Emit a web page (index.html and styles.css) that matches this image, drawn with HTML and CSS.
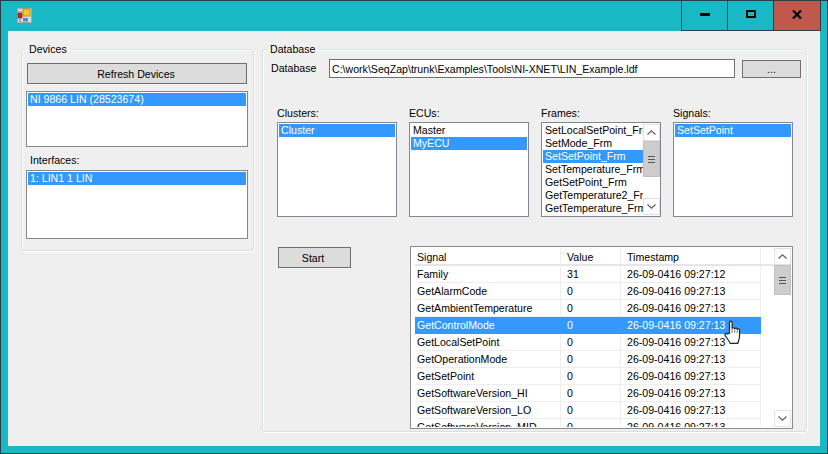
FILE: index.html
```html
<!DOCTYPE html>
<html lang="en">
<head>
    <meta charset="UTF-8">
    <title>LIN Example</title>
    <link rel="stylesheet" href="styles.css">
</head>
<body>
    <div class="window">
        <div class="titlebar">
            <svg class="app-icon" width="15" height="15" viewBox="0 0 15 15">
                <rect x="0.5" y="0.5" width="14" height="14" fill="#d8dcdc" stroke="#a9a9a0"/>
                <rect x="0" y="3" width="5" height="1" fill="#a9a9a0"/>
                <rect x="1" y="5" width="4" height="5" fill="#d81c1c" stroke="#8c1010" stroke-width="0.6"/>
                <rect x="6" y="1" width="7" height="7" fill="#f5c92e" stroke="#b8901c"/>
                <rect x="6" y="10" width="5" height="3.5" fill="#4c86e8"/>
                <rect x="2" y="11" width="2" height="3" fill="#a9a9a0"/>
            </svg>
            <div class="caption-buttons">
                <button type="button" class="caption-btn">
                    <svg width="10" height="3" viewBox="0 0 10 3"><rect width="10" height="3" fill="#000"/></svg>
                </button>
                <button type="button" class="caption-btn">
                    <svg width="10" height="8" viewBox="0 0 10 8"><rect x="1" y="1" width="8" height="6" fill="none" stroke="#000" stroke-width="2"/></svg>
                </button>
                <button type="button" class="caption-btn close">
                    <svg width="10" height="9" viewBox="0 0 10 9"><path d="M1 0.5 L9 8.5 M9 0.5 L1 8.5" stroke="#000" stroke-width="2.2" fill="none"/></svg>
                </button>
            </div>
        </div>

        <div class="client">
            <fieldset class="group devices">
                <legend>Devices</legend>
                <button type="button" class="btn refresh">Refresh Devices</button>
                <div class="listbox devices-list">
                    <div class="item selected">NI 9866 LIN (28523674)</div>
                </div>
                <label class="caption interfaces-label">Interfaces:</label>
                <div class="listbox interfaces-list">
                    <div class="item selected">1: LIN1 1 LIN</div>
                </div>
            </fieldset>

            <fieldset class="group database">
                <legend>Database</legend>
                <div class="db-row">
                    <label class="db-label">Database</label>
                    <input type="text" class="path" readonly value="C:\work\SeqZap\trunk\Examples\Tools\NI-XNET\LIN_Example.ldf">
                    <button type="button" class="btn browse">...</button>
                </div>

                <div class="lists">
                    <div class="list-col">
                        <label class="caption">Clusters:</label>
                        <div class="listbox tall">
                            <div class="item selected">Cluster</div>
                        </div>
                    </div>
                    <div class="list-col">
                        <label class="caption">ECUs:</label>
                        <div class="listbox tall">
                            <div class="item">Master</div>
                            <div class="item selected">MyECU</div>
                        </div>
                    </div>
                    <div class="list-col">
                        <label class="caption">Frames:</label>
                        <div class="listbox tall with-scroll">
                            <div class="items">
                                <div class="item">SetLocalSetPoint_Frm</div>
                                <div class="item">SetMode_Frm</div>
                                <div class="item selected">SetSetPoint_Frm</div>
                                <div class="item">SetTemperature_Frm</div>
                                <div class="item">GetSetPoint_Frm</div>
                                <div class="item">GetTemperature2_Frm</div>
                                <div class="item">GetTemperature_Frm</div>
                            </div>
                            <div class="scrollbar">
                                <div class="arrow"><svg width="9" height="5" viewBox="0 0 9 5"><path d="M0.5 4.5 L4.5 0.8 L8.5 4.5" fill="none" stroke="#606060" stroke-width="1.2"/></svg></div>
                                <div class="thumb frames-thumb"><span class="grip"></span></div>
                                <div class="track"></div>
                                <div class="arrow"><svg width="9" height="5" viewBox="0 0 9 5"><path d="M0.5 0.5 L4.5 4.2 L8.5 0.5" fill="none" stroke="#606060" stroke-width="1.2"/></svg></div>
                            </div>
                        </div>
                    </div>
                    <div class="list-col">
                        <label class="caption">Signals:</label>
                        <div class="listbox tall">
                            <div class="item selected">SetSetPoint</div>
                        </div>
                    </div>
                </div>

                <div class="bottom">
                    <button type="button" class="btn start">Start</button>
                    <div class="grid-view">
                        <div class="grid-body">
                            <div class="grid-row head">
                                <div class="cell c-signal">Signal</div>
                                <div class="cell c-value">Value</div>
                                <div class="cell c-time">Timestamp</div>
                            </div>
                            <div class="grid-row">
                                <div class="cell c-signal">Family</div>
                                <div class="cell c-value">31</div>
                                <div class="cell c-time">26-09-0416 09:27:12</div>
                            </div>
                            <div class="grid-row">
                                <div class="cell c-signal">GetAlarmCode</div>
                                <div class="cell c-value">0</div>
                                <div class="cell c-time">26-09-0416 09:27:13</div>
                            </div>
                            <div class="grid-row">
                                <div class="cell c-signal">GetAmbientTemperature</div>
                                <div class="cell c-value">0</div>
                                <div class="cell c-time">26-09-0416 09:27:13</div>
                            </div>
                            <div class="grid-row selected">
                                <div class="cell c-signal">GetControlMode</div>
                                <div class="cell c-value">0</div>
                                <div class="cell c-time">26-09-0416 09:27:13</div>
                            </div>
                            <div class="grid-row">
                                <div class="cell c-signal">GetLocalSetPoint</div>
                                <div class="cell c-value">0</div>
                                <div class="cell c-time">26-09-0416 09:27:13</div>
                            </div>
                            <div class="grid-row">
                                <div class="cell c-signal">GetOperationMode</div>
                                <div class="cell c-value">0</div>
                                <div class="cell c-time">26-09-0416 09:27:13</div>
                            </div>
                            <div class="grid-row">
                                <div class="cell c-signal">GetSetPoint</div>
                                <div class="cell c-value">0</div>
                                <div class="cell c-time">26-09-0416 09:27:13</div>
                            </div>
                            <div class="grid-row">
                                <div class="cell c-signal">GetSoftwareVersion_HI</div>
                                <div class="cell c-value">0</div>
                                <div class="cell c-time">26-09-0416 09:27:13</div>
                            </div>
                            <div class="grid-row">
                                <div class="cell c-signal">GetSoftwareVersion_LO</div>
                                <div class="cell c-value">0</div>
                                <div class="cell c-time">26-09-0416 09:27:13</div>
                            </div>
                            <div class="grid-row">
                                <div class="cell c-signal">GetSoftwareVersion_MID</div>
                                <div class="cell c-value">0</div>
                                <div class="cell c-time">26-09-0416 09:27:13</div>
                            </div>
                        </div>
                        <div class="scrollbar">
                            <div class="arrow"><svg width="9" height="5" viewBox="0 0 9 5"><path d="M0.5 4.5 L4.5 0.8 L8.5 4.5" fill="none" stroke="#606060" stroke-width="1.2"/></svg></div>
                            <div class="thumb grid-thumb"><span class="grip"></span></div>
                            <div class="track"></div>
                            <div class="arrow"><svg width="9" height="5" viewBox="0 0 9 5"><path d="M0.5 0.5 L4.5 4.2 L8.5 0.5" fill="none" stroke="#606060" stroke-width="1.2"/></svg></div>
                        </div>
                        <svg class="hand" width="17" height="24" viewBox="0.5 0 14.5 22">
                            <path d="M5 12 V2.2 C5 0.6 7.4 0.6 7.4 2.2 V8 C7.6 6.8 9.6 6.8 9.8 8.2 C10 7.2 12 7.2 12.1 8.6 C12.4 7.8 14.2 8 14.2 9.4 V15 C14.2 18 13 19 12.6 21.4 H5.6 C5 19.4 2.6 16.8 1.2 14.6 C0.2 13 1.8 11.6 3.2 12.8 Z" fill="#fff" stroke="#222" stroke-width="1.1"/>
                            <path d="M7.4 8 V12 M9.8 8.2 V12 M12.1 8.6 V12" stroke="#555" stroke-width="0.7" fill="none"/>
                        </svg>
                    </div>
                </div>
            </fieldset>
        </div>
    </div>
</body>
</html>
```

FILE: styles.css
```css
* {
    box-sizing: border-box;
}

html, body {
    margin: 0;
    height: 100%;
}

body {
    font-family: "Liberation Sans", Arial, sans-serif;
    font-size: 10.6px;
    color: #000;
    overflow: hidden;
}

.window {
    width: 828px;
    height: 454px;
    background-color: #18b9c4;
    border: 1px solid #2b3f48;
    padding: 0 7px 7px 7px;
    display: flex;
    flex-direction: column;
}

.titlebar {
    height: 30px;
    display: flex;
    justify-content: space-between;
    align-items: flex-start;
    flex-shrink: 0;
}

.app-icon {
    margin: 7px 0 0 9px;
}

.caption-buttons {
    display: flex;
    height: 30px;
    border-left: 1px solid #2b3f48;
    border-bottom: 1px solid #2b3f48;
    border-right: 1px solid #2b3f48;
    margin-right: -1px;
}

.caption-btn {
    width: 46px;
    padding: 0 0 3px 0;
    border: none;
    border-right: 1px solid #2b3f48;
    background-color: #18b9c4;
    display: flex;
    align-items: center;
    justify-content: center;
}

.caption-btn:last-child {
    border-right: none;
}

.caption-btn.close {
    background-color: #c0584e;
}

.client {
    flex: 1;
    background-color: #efefef;
    padding: 10px 13px 14px 13px;
    display: flex;
    gap: 8px;
    align-items: flex-start;
}

fieldset.group {
    margin: 0;
    border: 1px solid #d6dfe4;
    border-radius: 3px;
    box-shadow: inset 1px 1px 0 #fff, 1px 1px 0 #fff;
    padding: 0;
}

fieldset.group legend {
    margin-left: 3px;
    padding: 0 4px;
    line-height: 16px;
}

fieldset.devices {
    width: 233px;
    height: 210px;
    padding: 0 0 0 4px;
}

fieldset.devices legend {
    margin-left: -1px;
}

.devices .refresh {
    display: block;
    margin: 6px 0 0 1px;
    width: 220px;
    height: 21px;
    padding-right: 2px;
}

.database {
    width: 545px;
    height: 391px;
}

.btn {
    font: inherit;
    background-color: #dcdcdc;
    border: 1px solid #6f6f6f;
    padding: 0;
    color: #000;
}

.listbox {
    background-color: #fff;
    border: 1px solid #828790;
    padding: 1px;
    overflow: hidden;
}

.item {
    height: 13px;
    line-height: 13px;
    padding-left: 2px;
    white-space: nowrap;
}

.selected {
    background-color: #3399ff;
    color: #fff;
}

.devices-list {
    margin-top: 7px;
    width: 222px;
    height: 56px;
}

.caption {
    display: block;
    height: 16px;
    line-height: 16px;
}

.interfaces-label {
    margin: 5px 0 0 4px;
}

.interfaces-list {
    width: 222px;
    height: 69px;
    margin-top: 2px;
}

.db-row {
    display: flex;
    align-items: flex-start;
    margin: 2px 0 0 8px;
}

.db-label {
    width: 58px;
    line-height: 19px;
}

.path {
    font: inherit;
    width: 406px;
    height: 19px;
    border: 1px solid #6f6f6f;
    padding: 0 2px;
    background-color: #fff;
    outline: none;
}

.browse {
    margin: 1px 0 0 7px;
    width: 59px;
    height: 18px;
    line-height: 14px;
}

.lists {
    display: flex;
    gap: 12px;
    margin: 27px 0 0 14px;
}

.list-col {
    width: 120px;
}

.tall {
    height: 95px;
    margin-top: 1px;
}

.with-scroll {
    display: flex;
    padding-right: 1px;
}

.items {
    width: 100px;
    overflow: hidden;
    flex-shrink: 0;
}

.scrollbar {
    width: 17px;
    display: flex;
    flex-direction: column;
    flex-shrink: 0;
    background: #fff;
}

.arrow {
    height: 17px;
    border: 1px solid #e2e2e2;
    display: flex;
    align-items: center;
    justify-content: center;
    background-color: #fff;
    flex-shrink: 0;
}

.thumb {
    background-color: #cdcdcd;
    border: 1px solid #c0c0c0;
    display: flex;
    align-items: center;
    justify-content: center;
    flex-shrink: 0;
}

.frames-thumb {
    height: 36px;
}

.grid-thumb {
    height: 30px;
}

.track {
    flex: 1;
    background-color: #fff;
}

.grip {
    width: 7px;
    height: 7px;
    border-top: 1px solid #555;
    border-bottom: 1px solid #555;
    background: linear-gradient(#555, #555) center / 100% 1px no-repeat;
}

.bottom {
    display: flex;
    align-items: flex-start;
    margin: 29px 0 0 15px;
}

.start {
    width: 73px;
    height: 21px;
    margin-top: 1px;
    padding-right: 3px;
}

.grid-view {
    position: relative;
    margin-left: 59px;
    width: 383px;
    height: 183px;
    border: 1px solid #8c8c8c;
    background-color: #fff;
    display: flex;
    padding: 1px;
}

.grid-body {
    width: 363px;
    height: 179px;
    overflow: hidden;
    flex-shrink: 0;
}

.grid-row {
    display: flex;
    height: 17px;
    margin-left: 3px;
    width: 346px;
    line-height: 16px;
    border-bottom: 1px solid #eeeeee;
}

.grid-row.selected {
    border-bottom-color: #3399ff;
}

.grid-row.head {
    height: 18px;
    line-height: 18px;
    border-bottom: 2px solid #e6e6e6;
    width: 360px;
}

.cell {
    padding-left: 2px;
    white-space: nowrap;
    overflow: hidden;
    border-right: 1px solid #eeeeee;
}

.selected .cell {
    border-right-color: #3399ff;
}

.c-signal {
    width: 146px;
}

.c-value {
    width: 60px;
    padding-left: 6px;
}

.c-time {
    width: 140px;
    padding-left: 6px;
}

.grid-view .scrollbar {
    height: 179px;
    margin-left: -1px;
}

.hand {
    position: absolute;
    left: 313px;
    top: 73px;
}
```
